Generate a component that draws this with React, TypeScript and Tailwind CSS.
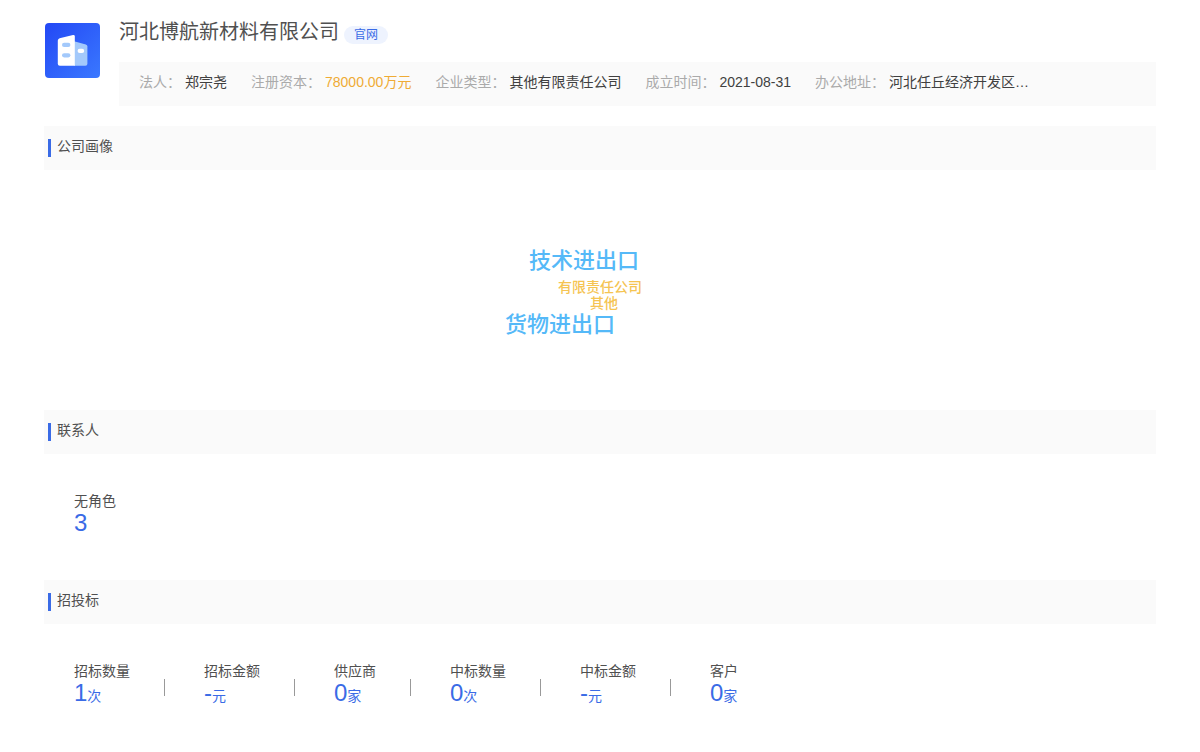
const company = {
  name: "河北博航新材料有限公司",
  info: [
    { label: "法人：", value: "郑宗尧" },
    { label: "注册资本：", value: "78000.00万元", highlight: true },
    { label: "企业类型：", value: "其他有限责任公司" },
    { label: "成立时间：", value: "2021-08-31" },
    { label: "办公地址：", value: "河北任丘经济开发区…" },
  ],
};

const contacts = [{ label: "无角色", value: "3", unit: "" }];

const bids = [
  { label: "招标数量", value: "1", unit: "次" },
  { label: "招标金额", value: "-", unit: "元" },
  { label: "供应商", value: "0", unit: "家" },
  { label: "中标数量", value: "0", unit: "次" },
  { label: "中标金额", value: "-", unit: "元" },
  { label: "客户", value: "0", unit: "家" },
];

type Stat = { label: string; value: string; unit: string };

function CompanyLogo() {
  return (
    <svg viewBox="0 0 55 55" className="ml-px h-[55px] w-[55px] shrink-0" aria-hidden="true">
      <defs>
        <linearGradient id="logo-bg" x1="0" y1="0" x2="1" y2="1">
          <stop offset="0" stopColor="#2348f5" />
          <stop offset="1" stopColor="#3a78ff" />
        </linearGradient>
      </defs>
      <rect width="55" height="55" rx="4" fill="url(#logo-bg)" />
      <path d="M29 18.2 40.8 21.4Q42.4 22 42.4 23.6V40.8Q42.4 42.8 40.4 42.8H29Z" fill="#a3c9fb" />
      <path d="M14.6 15.3 28 12.1Q29.8 11.8 29.8 13.5V42.8H14.8Q12.8 42.8 12.8 40.8V17.8Q12.8 15.8 14.6 15.3Z" fill="#fff" />
      <rect x="17" y="19.8" width="8.4" height="4.2" rx="2.1" fill="#a3c9fb" />
      <rect x="17" y="30.2" width="8.4" height="4.2" rx="2.1" fill="#a3c9fb" />
      <rect x="32.6" y="25.8" width="6.6" height="4.2" rx="2.1" fill="#fff" />
    </svg>
  );
}

function SectionTitle({ children }: { children: string }) {
  return (
    <div className="flex h-11 items-center bg-[#fafafa] pl-1">
      <span className="h-[18px] w-[3px] bg-[#3a6be6]" />
      <h2 className="ml-1.5 pb-1 text-sm">{children}</h2>
    </div>
  );
}

function StatList({ items }: { items: Stat[] }) {
  return (
    <dl className="flex px-[30px] pt-[37px] pb-11">
      {items.map((item, i) => (
        <div key={item.label} className="flex items-center">
          <div className="h-[45px]">
            <dt className="text-sm leading-5">{item.label}</dt>
            <dd className="text-2xl leading-6 text-[#3a6be6]">
              {item.value}
              <span className="text-sm leading-6">{item.unit}</span>
            </dd>
          </div>
          {i < items.length - 1 && <span className="mt-2 mr-[39px] ml-[34px] h-[17px] w-px bg-[#999]" />}
        </div>
      ))}
    </dl>
  );
}

export default function App() {
  return (
    <main
      lang="zh-CN"
      className="bg-white px-11 pt-[18px] font-['Liberation_Sans','Noto_Sans_CJK_SC',sans-serif] text-[#505050]"
    >
      <header className="flex items-start">
        <div className="pt-[5px]">
          <CompanyLogo />
        </div>
        <div className="ml-[19px] min-w-0 flex-1">
          <div className="flex h-11 items-start">
            <h1 className="text-xl leading-7">{company.name}</h1>
            <a
              href="#website"
              className="mt-2 ml-[5px] rounded-full bg-[#eef3fe] px-2.5 text-xs leading-[18px] text-[#3a6be6]"
            >
              官网
            </a>
          </div>
          <dl className="flex h-11 items-center gap-6 bg-[#fafafa] px-5 pb-1 text-sm whitespace-nowrap">
            {company.info.map((item) => (
              <div key={item.label} className="flex gap-1">
                <dt className="text-[#aaa]">{item.label}</dt>
                <dd className={item.highlight ? "text-[#efab35]" : "text-[#404040]"}>{item.value}</dd>
              </div>
            ))}
          </dl>
        </div>
      </header>

      <section className="mt-5">
        <SectionTitle>公司画像</SectionTitle>
        <div className="relative h-60 font-medium">
          <div className="absolute top-1/2 left-1/2 h-24 w-36 -translate-x-1/2 -translate-y-1/2 whitespace-nowrap">
            <span className="absolute top-[3px] left-px text-[22px] leading-8 text-[#55b9f8]">技术进出口</span>
            <span className="absolute top-[35px] left-[30px] text-sm leading-5 text-[#f5c452]">有限责任公司</span>
            <span className="absolute top-[51px] left-[62px] text-sm leading-5 text-[#f5c452]">其他</span>
            <span className="absolute top-[67px] -left-[23px] text-[22px] leading-8 text-[#55b9f8]">货物进出口</span>
          </div>
        </div>
      </section>

      <section>
        <SectionTitle>联系人</SectionTitle>
        <StatList items={contacts} />
      </section>

      <section>
        <SectionTitle>招投标</SectionTitle>
        <StatList items={bids} />
      </section>
    </main>
  );
}
